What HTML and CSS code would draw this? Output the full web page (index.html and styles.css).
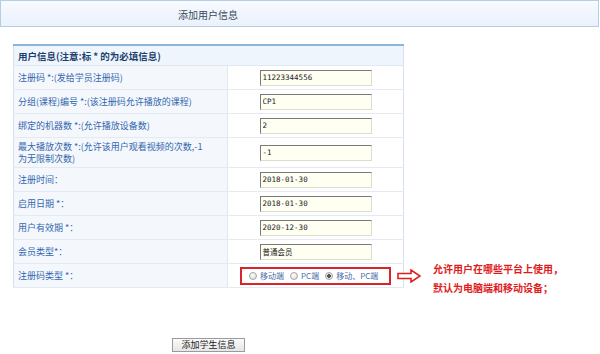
FILE: index.html
```html
<!DOCTYPE html>
<html lang="zh">
<head>
    <meta charset="UTF-8">
    <title>添加用户信息</title>
    <link rel="stylesheet" href="styles.css">
</head>
<body>
    <div class="page-title">添加用户信息</div>

    <div class="form-wrap">
        <table class="info-table">
            <tr>
                <th colspan="2">用户信息(注意:标 * 的为必填信息)</th>
            </tr>
            <tr>
                <td class="label">注册码 *:(发给学员注册码)</td>
                <td class="value"><input class="field" type="text" value="11223344556"></td>
            </tr>
            <tr>
                <td class="label">分组(课程)编号 *:(该注册码允许播放的课程)</td>
                <td class="value"><input class="field" type="text" value="CP1"></td>
            </tr>
            <tr>
                <td class="label">绑定的机器数 *:(允许播放设备数)</td>
                <td class="value"><input class="field" type="text" value="2"></td>
            </tr>
            <tr class="tall">
                <td class="label">最大播放次数 *:(允许该用户观看视频的次数,-1<br>为无限制次数)</td>
                <td class="value"><input class="field" type="text" value="-1"></td>
            </tr>
            <tr>
                <td class="label">注册时间：</td>
                <td class="value"><input class="field" type="text" value="2018-01-30"></td>
            </tr>
            <tr>
                <td class="label">启用日期 *：</td>
                <td class="value"><input class="field" type="text" value="2018-01-30"></td>
            </tr>
            <tr>
                <td class="label">用户有效期 *：</td>
                <td class="value"><input class="field" type="text" value="2020-12-30"></td>
            </tr>
            <tr>
                <td class="label">会员类型*：</td>
                <td class="value"><input class="field" type="text" value="普通会员"></td>
            </tr>
            <tr>
                <td class="label">注册码类型 *：</td>
                <td class="value">
                    <div class="radio-box">
                        <label><input type="radio" name="ctype"> 移动端</label>
                        <label><input type="radio" name="ctype"> PC端</label>
                        <label><input type="radio" name="ctype" checked> 移动、PC端</label>
                    </div>
                </td>
            </tr>
        </table>

        <!-- 标注 -->
        <div class="note">
            <svg class="note-arrow" width="24" height="14" viewBox="0 0 24 14">
                <path d="M1 4.5 H14 V1 L23 7 L14 13 V9.5 H1 Z" fill="#fff" stroke="#e02020" stroke-width="1.6"/>
            </svg>
            <div class="note-text">
                <p>允许用户在哪些平台上使用，</p>
                <p>默认为电脑端和移动设备；</p>
            </div>
        </div>
    </div>

    <div class="actions">
        <button class="submit-btn">添加学生信息</button>
    </div>
</body>
</html>
```

FILE: styles.css
```css
body {
    margin: 0;
    background: #fff;
    font-family: "Noto Sans CJK SC", "Noto Sans", sans-serif;
    font-size: 9px;
    color: #333;
}

.page-title {
    width: 420px;
    height: 25px;
    line-height: 28px;
    padding-left: 177px;
    border: 1px solid #b5cfe2;
    background: linear-gradient(#f7faff, #eaf1fb);
    font-size: 10px;
    color: #3a4a5a;
}

.form-wrap {
    position: relative;
    margin: 17px 0 0 13px;
    width: 391px;
}

.info-table {
    width: 391px;
    border-collapse: collapse;
    border-top: 2px solid #8fb5d6;
    border-left: 1px solid #d5e2ee;
    border-right: 1px solid #d5e2ee;
    border-bottom: 1px solid #c8d8e6;
}

.info-table th {
    height: 19px;
    padding: 0 4px;
    text-align: left;
    font-size: 9.5px;
    font-weight: bold;
    color: #1d3f6e;
    background: #eef5fd;
    border-bottom: 1px solid #dfe8f1;
}

.info-table td {
    height: 23px;
    border-bottom: 1px solid #e3eaf1;
    padding: 0;
}

.info-table .tall td {
    height: 29px;
}

.label {
    width: 209px;
    padding: 0 0 0 4px !important;
    background: #f4f8fd;
    border-right: 1px solid #dfe7ef;
    color: #3366ad;
    line-height: 12px;
}

.value {
    text-align: center;
}

.field {
    box-sizing: border-box;
    width: 112px;
    height: 16px;
    margin: 0;
    padding: 0 2px;
    background: #fffff2;
    border: 1px solid #dcdcd0;
    border-top-color: #7a7a7a;
    border-left-color: #7a7a7a;
    font-family: "DejaVu Sans Mono", "Noto Sans CJK SC", monospace;
    font-size: 7.5px;
    color: #222;
    vertical-align: middle;
}

.radio-box {
    display: inline-flex;
    align-items: center;
    gap: 6px;
    box-sizing: border-box;
    width: 151px;
    height: 18px;
    padding: 0 0 0 7px;
    border: 2px solid #d9252a;
    vertical-align: middle;
}

.radio-box label {
    display: flex;
    align-items: center;
    gap: 3px;
    font-size: 8px;
    color: #4a6ea8;
    white-space: nowrap;
}

.radio-box input {
    appearance: none;
    width: 8px;
    height: 8px;
    margin: 0;
    border-radius: 50%;
    border: 1px solid #a8a8a8;
    background: radial-gradient(circle at 40% 35%, #fff, #d4d4d4);
}

.radio-box input:checked {
    background: radial-gradient(circle, #555 0 1.6px, #e4e4e4 2px);
}

.note {
    position: absolute;
    left: 384px;
    top: 219px;
    display: flex;
    align-items: flex-start;
    gap: 12px;
}

.note-arrow {
    margin-top: 6px;
}

.note-text p {
    margin: 0 0 7px;
    font-size: 10px;
    font-weight: bold;
    color: #e01b1b;
    line-height: 12px;
    white-space: nowrap;
}

.actions {
    width: 417px;
    margin-top: 50px;
    text-align: center;
}

.submit-btn {
    height: 14px;
    padding: 0 8px;
    font-family: "Noto Sans CJK SC", sans-serif;
    font-size: 9px;
    line-height: 12px;
    color: #222;
    background: linear-gradient(#fbfbfb, #e6e6e6);
    border: 1px solid #9a9a9a;
    border-radius: 0;
}
```
